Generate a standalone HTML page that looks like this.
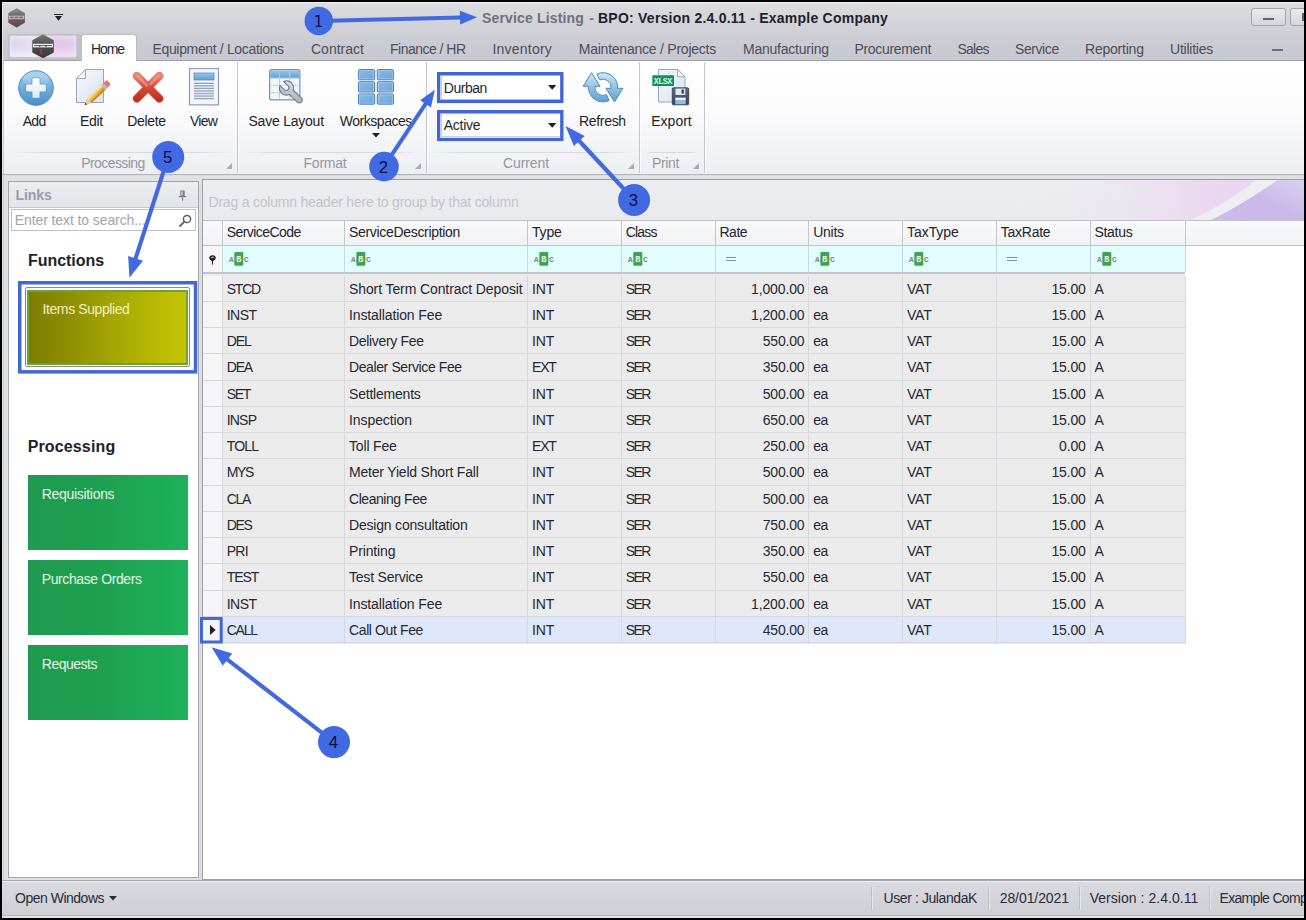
<!DOCTYPE html>
<html><head><meta charset="utf-8">
<title>Service Listing - BPO</title>
<style>
*{box-sizing:border-box;margin:0;padding:0}
html,body{width:1306px;height:920px;overflow:hidden;background:#000}
body{font-family:"Liberation Sans",sans-serif;font-size:13px;color:#1e1e2a;position:relative}
.abs{position:absolute}
.t{position:absolute;white-space:nowrap}
svg{overflow:visible}
</style></head><body>
<div class="abs" style="left:2.00px;top:2.00px;width:1302.00px;height:916.00px;background:#e0e1e5"></div>
<div class="abs" style="left:2.00px;top:2.00px;width:1302.00px;height:59.00px;background:linear-gradient(#e4e5e8 0,#dadbdf 3px,#d3d4d9 20px,#cbccd3 40px,#c8c9d0 59px)"></div>
<div class="abs" style="left:2.00px;top:2.00px;width:1302.00px;height:1.00px;background:#f1f1f3"></div>
<div class="abs" style="left:2.00px;top:2.00px;width:1.00px;height:916.00px;background:#e6e7ea"></div>
<div class="abs" style="left:3.00px;top:60.00px;width:1.00px;height:820.00px;background:#c9cad1"></div>
<div class="t" style="left:482.00px;top:9.85px;font-size:14px;line-height:17px;color:#6f707c;font-weight:bold;letter-spacing:0.160px;">Service Listing</div>
<div class="t" style="left:589.30px;top:9.85px;font-size:14px;line-height:17px;color:#6f707c;font-weight:bold;">-</div>
<div class="t" style="left:598.00px;top:9.85px;font-size:14px;line-height:17px;color:#1f202c;font-weight:bold;letter-spacing:0.234px;">BPO: Version 2.4.0.11 - Example Company</div>
<div class="abs" style="left:1251.00px;top:8.00px;width:35.00px;height:18.00px;border:1px solid #a2a3ab;border-radius:3px;background:linear-gradient(#e9eaed,#d6d7dc)"></div>
<div class="abs" style="left:1263.00px;top:18.00px;width:11.00px;height:2.00px;background:#60616c"></div>
<div class="abs" style="left:1290.00px;top:8.00px;width:35.00px;height:18.00px;border:1px solid #a2a3ab;border-radius:3px;background:linear-gradient(#e9eaed,#d6d7dc)"></div>
<div class="abs" style="left:1302.00px;top:13.00px;width:3.00px;height:8.00px;background:#60616c"></div>
<div class="abs" style="left:1272.00px;top:49.00px;width:11.00px;height:2.00px;background:#6c6d78"></div>
<div class="abs" style="left:7.50px;top:34.00px;width:73.00px;height:26.00px;background:#bfc0c7;border-radius:2px 3px 0 0"></div>
<div class="abs" style="left:8.50px;top:35.00px;width:68.60px;height:22.80px;border-radius:2px;border:1px solid #cfc6da;background:linear-gradient(90deg,#ddd3ec 0,#e7dcf1 30%,#e3c6ea 70%,#dccbe9 100%);box-shadow:inset 0 -6px 6px rgba(255,255,255,.45), inset 0 3px 4px rgba(255,255,255,.35)"></div>
<div class="abs" style="left:81.00px;top:34.00px;width:56.00px;height:28.00px;background:#fdfdfe;border:1px solid #b9bac2;border-bottom:none;border-radius:3px 3px 0 0"></div>
<div class="t" style="left:91.00px;top:41.25px;font-size:14px;line-height:17px;color:#23242f;letter-spacing:-1.086px;">Home</div>
<div class="t" style="left:152.50px;top:41.25px;font-size:14px;line-height:17px;color:#4b4c59;letter-spacing:-0.347px;">Equipment / Locations</div>
<div class="t" style="left:311.00px;top:41.25px;font-size:14px;line-height:17px;color:#4b4c59;letter-spacing:0.011px;">Contract</div>
<div class="t" style="left:390.00px;top:41.25px;font-size:14px;line-height:17px;color:#4b4c59;letter-spacing:-0.516px;">Finance / HR</div>
<div class="t" style="left:492.50px;top:41.25px;font-size:14px;line-height:17px;color:#4b4c59;letter-spacing:0.213px;">Inventory</div>
<div class="t" style="left:578.75px;top:41.25px;font-size:14px;line-height:17px;color:#4b4c59;letter-spacing:-0.234px;">Maintenance / Projects</div>
<div class="t" style="left:743.00px;top:41.25px;font-size:14px;line-height:17px;color:#4b4c59;letter-spacing:-0.228px;">Manufacturing</div>
<div class="t" style="left:854.50px;top:41.25px;font-size:14px;line-height:17px;color:#4b4c59;letter-spacing:-0.331px;">Procurement</div>
<div class="t" style="left:957.50px;top:41.25px;font-size:14px;line-height:17px;color:#4b4c59;letter-spacing:-0.754px;">Sales</div>
<div class="t" style="left:1015.00px;top:41.25px;font-size:14px;line-height:17px;color:#4b4c59;letter-spacing:-0.419px;">Service</div>
<div class="t" style="left:1085.00px;top:41.25px;font-size:14px;line-height:17px;color:#4b4c59;letter-spacing:-0.217px;">Reporting</div>
<div class="t" style="left:1170.00px;top:41.25px;font-size:14px;line-height:17px;color:#4b4c59;letter-spacing:-0.235px;">Utilities</div>
<div class="abs" style="left:4.00px;top:60.90px;width:1300.00px;height:113.10px;background:linear-gradient(#ffffff 0,#fcfcfd 45px,#f1f2f5 95px,#eceef1 113px)"></div>
<div class="abs" style="left:4.00px;top:59.90px;width:77.00px;height:1.00px;background:#a1a2aa"></div>
<div class="abs" style="left:137.00px;top:59.90px;width:1167.00px;height:1.00px;background:#a1a2aa"></div>
<div class="abs" style="left:2.00px;top:174.00px;width:1302.00px;height:1.00px;background:#b2b3bb"></div>
<div class="abs" style="left:2.00px;top:175.00px;width:1302.00px;height:1.00px;background:#dcdde1"></div>
<div class="abs" style="left:237.00px;top:62.00px;width:1.00px;height:111.00px;background:#c6c7ce"></div>
<div class="abs" style="left:238.00px;top:62.00px;width:1.00px;height:111.00px;background:#fbfbfc"></div>
<div class="abs" style="left:426.00px;top:62.00px;width:1.00px;height:111.00px;background:#c6c7ce"></div>
<div class="abs" style="left:427.00px;top:62.00px;width:1.00px;height:111.00px;background:#fbfbfc"></div>
<div class="abs" style="left:639.30px;top:62.00px;width:1.00px;height:111.00px;background:#c6c7ce"></div>
<div class="abs" style="left:640.30px;top:62.00px;width:1.00px;height:111.00px;background:#fbfbfc"></div>
<div class="abs" style="left:704.30px;top:62.00px;width:1.00px;height:111.00px;background:#c6c7ce"></div>
<div class="abs" style="left:705.30px;top:62.00px;width:1.00px;height:111.00px;background:#fbfbfc"></div>
<div class="abs" style="left:12.00px;top:151.50px;width:220.00px;height:1.00px;background:linear-gradient(90deg,rgba(214,215,221,0),#d9dade 15%,#d9dade 85%,rgba(214,215,221,0))"></div>
<div class="abs" style="left:243.00px;top:151.50px;width:178.00px;height:1.00px;background:linear-gradient(90deg,rgba(214,215,221,0),#d9dade 15%,#d9dade 85%,rgba(214,215,221,0))"></div>
<div class="abs" style="left:432.00px;top:151.50px;width:202.00px;height:1.00px;background:linear-gradient(90deg,rgba(214,215,221,0),#d9dade 15%,#d9dade 85%,rgba(214,215,221,0))"></div>
<div class="abs" style="left:645.00px;top:151.50px;width:54.00px;height:1.00px;background:linear-gradient(90deg,rgba(214,215,221,0),#d9dade 15%,#d9dade 85%,rgba(214,215,221,0))"></div>
<div class="t" style="left:81.25px;top:155.35px;font-size:14px;line-height:17px;color:#9596a1;letter-spacing:-0.576px;">Processing</div>
<div class="t" style="left:303.50px;top:155.35px;font-size:14px;line-height:17px;color:#9596a1;letter-spacing:-0.223px;">Format</div>
<div class="t" style="left:503.00px;top:155.35px;font-size:14px;line-height:17px;color:#9596a1;letter-spacing:-0.098px;">Current</div>
<div class="t" style="left:652.00px;top:155.35px;font-size:14px;line-height:17px;color:#9596a1;letter-spacing:-0.357px;">Print</div>
<svg class="abs" style="left:226.0px;top:163px" width="6" height="6"><path d="M6 0V6H0Z" fill="#a9aab3"/></svg>
<svg class="abs" style="left:415.0px;top:163px" width="6" height="6"><path d="M6 0V6H0Z" fill="#a9aab3"/></svg>
<svg class="abs" style="left:628.0px;top:163px" width="6" height="6"><path d="M6 0V6H0Z" fill="#a9aab3"/></svg>
<svg class="abs" style="left:693.0px;top:163px" width="6" height="6"><path d="M6 0V6H0Z" fill="#a9aab3"/></svg>
<div class="t" style="left:22.70px;top:113.35px;font-size:14px;line-height:17px;color:#1e1f2a;letter-spacing:-0.703px;">Add</div>
<div class="t" style="left:80.00px;top:113.35px;font-size:14px;line-height:17px;color:#1e1f2a;letter-spacing:-0.356px;">Edit</div>
<div class="t" style="left:127.20px;top:113.35px;font-size:14px;line-height:17px;color:#1e1f2a;letter-spacing:-0.311px;">Delete</div>
<div class="t" style="left:190.00px;top:113.35px;font-size:14px;line-height:17px;color:#1e1f2a;letter-spacing:-0.773px;">View</div>
<div class="t" style="left:248.50px;top:113.35px;font-size:14px;line-height:17px;color:#1e1f2a;letter-spacing:-0.230px;">Save Layout</div>
<div class="t" style="left:339.80px;top:113.35px;font-size:14px;line-height:17px;color:#1e1f2a;letter-spacing:-0.477px;">Workspaces</div>
<div class="t" style="left:579.00px;top:113.35px;font-size:14px;line-height:17px;color:#1e1f2a;letter-spacing:-0.317px;">Refresh</div>
<div class="t" style="left:651.30px;top:113.35px;font-size:14px;line-height:17px;color:#1e1f2a;letter-spacing:-0.010px;">Export</div>
<svg class="abs" style="left:372px;top:133px" width="8" height="5"><path d="M0 0H8L4 4.5Z" fill="#1e1f2a"/></svg>
<div class="abs" style="left:437.30px;top:72.10px;width:126.50px;height:31.10px;background:#fff"></div>
<div class="abs" style="left:440.50px;top:75.30px;width:120.20px;height:24.70px;border:1px solid #cfd0d6"></div>
<svg class="abs" style="left:437.300px;top:72.10px" width="126.500" height="31.10"><rect x="1.650" y="1.650" width="123.200" height="27.80" fill="none" stroke="#4066d8" stroke-width="3.300"/></svg>
<div class="t" style="left:443.80px;top:79.95px;font-size:14px;line-height:17px;color:#1e1f2a;letter-spacing:-0.486px;">Durban</div>
<svg class="abs" style="left:548.300px;top:85.1px" width="8.400" height="5"><path d="M0 0H8.400L4.200 4.800Z" fill="#1e1f2a"/></svg>
<div class="abs" style="left:437.30px;top:109.50px;width:126.50px;height:31.10px;background:#fff"></div>
<div class="abs" style="left:440.50px;top:112.70px;width:120.20px;height:24.70px;border:1px solid #cfd0d6"></div>
<svg class="abs" style="left:437.300px;top:109.50px" width="126.500" height="31.10"><rect x="1.650" y="1.650" width="123.200" height="27.80" fill="none" stroke="#4066d8" stroke-width="3.300"/></svg>
<div class="t" style="left:443.80px;top:116.85px;font-size:14px;line-height:17px;color:#1e1f2a;letter-spacing:-0.271px;">Active</div>
<svg class="abs" style="left:548.300px;top:122.5px" width="8.400" height="5"><path d="M0 0H8.400L4.200 4.800Z" fill="#1e1f2a"/></svg>
<div class="abs" style="left:2.00px;top:880.00px;width:1302.00px;height:38.00px;background:linear-gradient(#dadbdf 0,#d3d4da 55%,#cccdd3 100%)"></div>
<div class="abs" style="left:2.00px;top:879.50px;width:1302.00px;height:1.00px;background:#a3a4ac"></div>
<div class="abs" style="left:2.00px;top:880.50px;width:1302.00px;height:1.00px;background:#eeeff1"></div>
<div class="abs" style="left:2.00px;top:915.00px;width:1302.00px;height:1.00px;background:#b5b6bc"></div>
<div class="abs" style="left:2.00px;top:916.00px;width:1302.00px;height:2.00px;background:#e2e3e7"></div>
<div class="t" style="left:15.00px;top:889.95px;font-size:14px;line-height:17px;color:#2a2b38;letter-spacing:-0.494px;">Open Windows</div>
<svg class="abs" style="left:109.4px;top:896.2px" width="8" height="5"><path d="M0 0H8L4 4.5Z" fill="#2a2b38"/></svg>
<div class="abs" style="left:871.40px;top:886.50px;width:1.00px;height:23.00px;background:#bdbec5"></div>
<div class="abs" style="left:872.40px;top:886.50px;width:1.00px;height:23.00px;background:#e6e7ea"></div>
<div class="abs" style="left:988.10px;top:886.50px;width:1.00px;height:23.00px;background:#bdbec5"></div>
<div class="abs" style="left:989.10px;top:886.50px;width:1.00px;height:23.00px;background:#e6e7ea"></div>
<div class="abs" style="left:1079.10px;top:886.50px;width:1.00px;height:23.00px;background:#bdbec5"></div>
<div class="abs" style="left:1080.10px;top:886.50px;width:1.00px;height:23.00px;background:#e6e7ea"></div>
<div class="abs" style="left:1208.90px;top:886.50px;width:1.00px;height:23.00px;background:#bdbec5"></div>
<div class="abs" style="left:1209.90px;top:886.50px;width:1.00px;height:23.00px;background:#e6e7ea"></div>
<div class="t" style="left:883.50px;top:889.95px;font-size:14px;line-height:17px;color:#2a2b38;letter-spacing:-0.407px;">User : JulandaK</div>
<div class="t" style="left:999.70px;top:889.95px;font-size:14px;line-height:17px;color:#2a2b38;letter-spacing:-0.077px;">28/01/2021</div>
<div class="t" style="left:1089.70px;top:889.95px;font-size:14px;line-height:17px;color:#2a2b38;letter-spacing:0.037px;">Version : 2.4.0.11</div>
<div class="t" style="left:1219.50px;top:889.95px;font-size:14px;line-height:17px;color:#2a2b38;letter-spacing:-0.685px;">Example Company</div>
<svg width="0" height="0" style="position:absolute"><defs>
<linearGradient id="gHex" x1="0" y1="0" x2="0" y2="1"><stop offset="0" stop-color="#7b7b7d"/><stop offset=".45" stop-color="#4d4d4f"/><stop offset="1" stop-color="#3a3a3c"/></linearGradient>
<linearGradient id="gHex2" x1="0" y1="0" x2="0" y2="1"><stop offset="0" stop-color="#8e8e90"/><stop offset=".5" stop-color="#636365"/><stop offset="1" stop-color="#4c4c4e"/></linearGradient>
<linearGradient id="gAdd" x1="0" y1="0" x2="0" y2="1"><stop offset="0" stop-color="#a9d3ec"/><stop offset=".5" stop-color="#6eaedb"/><stop offset="1" stop-color="#4b8fc6"/></linearGradient>
<linearGradient id="gPlus" x1="0" y1="0" x2="0" y2="1"><stop offset="0" stop-color="#ffffff"/><stop offset="1" stop-color="#d9ecf8"/></linearGradient>
<linearGradient id="gPage" x1="0" y1="0" x2="1" y2="1"><stop offset="0" stop-color="#f4f7fc"/><stop offset="1" stop-color="#dbe3f1"/></linearGradient>
<linearGradient id="gPen" x1="0" y1="0" x2="1" y2="1"><stop offset="0" stop-color="#f7d36a"/><stop offset="1" stop-color="#d99a24"/></linearGradient>
<linearGradient id="gDel" x1="0" y1="0" x2="0" y2="1"><stop offset="0" stop-color="#ea8473"/><stop offset=".5" stop-color="#d64a36"/><stop offset="1" stop-color="#c23222"/></linearGradient>
<linearGradient id="gBlue" x1="0" y1="0" x2="0" y2="1"><stop offset="0" stop-color="#9cc6ea"/><stop offset="1" stop-color="#5e9fd6"/></linearGradient>
<linearGradient id="gBlue2" x1="0" y1="0" x2="1" y2="1"><stop offset="0" stop-color="#8dbbe6"/><stop offset="1" stop-color="#6ba4da"/></linearGradient>
<linearGradient id="gWr" x1="0" y1="0" x2="1" y2="1"><stop offset="0" stop-color="#e3e7ec"/><stop offset="1" stop-color="#9aa3b0"/></linearGradient>
<linearGradient id="gRef" x1="0" y1="0" x2="0" y2="1"><stop offset="0" stop-color="#c9e8f8"/><stop offset="1" stop-color="#5d9fd6"/></linearGradient>
<linearGradient id="gRef2" x1="0" y1="1" x2="0" y2="0"><stop offset="0" stop-color="#c9e8f8"/><stop offset="1" stop-color="#5d9fd6"/></linearGradient>
<linearGradient id="gFl" x1="0" y1="0" x2="0" y2="1"><stop offset="0" stop-color="#5b6b86"/><stop offset="1" stop-color="#33425c"/></linearGradient>
</defs></svg>
<svg class="abs" style="left:8.00px;top:7.50px" width="17.2" height="20" viewBox="0 0 17.2 20"><path d="M8.6 0.3L16.9 5V14.8L8.6 19.6L0.3 14.8V5Z" fill="url(#gHex2)"/><rect x="1" y="7.700" width="15.200" height="3.600" fill="#cfcfd1" opacity=".8"/><rect x="2.200" y="8.700" width="3.400" height="1.500" fill="#6f6f72"/><rect x="6.800" y="8.700" width="3.400" height="1.500" fill="#6f6f72"/><rect x="11.400" y="8.700" width="3.400" height="1.500" fill="#6f6f72"/><rect x="4.600" y="11.700" width="5.600" height="3.400" fill="#a8343c" opacity=".6"/></svg>
<svg class="abs" style="left:54.00px;top:14.00px" width="9" height="8" viewBox="0 0 9 8"><rect x="0" y="0" width="9" height="1" fill="#1f2030"/><path d="M1 2H8L4.500 6.800Z" fill="#1c1d2c"/></svg>
<svg class="abs" style="left:31.60px;top:33.80px" width="22.1" height="24.6" viewBox="0 0 22.1 24.6"><path d="M11 0.3L21.8 6.2V18.4L11 24.3L0.3 18.4V6.2Z" fill="url(#gHex)"/><rect x="1" y="9.8" width="20" height="3.6" fill="#f2f2f2"/><rect x="2" y="11.2" width="18" height=".9" fill="#4a4a4c"/><rect x="7.2" y="11" width="1" height="2" fill="#4a4a4c"/><rect x="13.6" y="11" width="1" height="2" fill="#4a4a4c"/><path d="M7.5 15.5L10.2 15L9.6 17.4L11 20.5L8.6 20Z" fill="#c0343c" opacity=".9"/></svg>
<svg class="abs" style="left:17.60px;top:69.50px" width="36" height="36" viewBox="0 0 36 36"><circle cx="18" cy="18" r="17.300" fill="url(#gAdd)" stroke="#4f8dc0" stroke-width="1"/><ellipse cx="18" cy="9.500" rx="13" ry="7.500" fill="#fff" opacity=".16"/><path d="M15.00 8.80 H21.00 V15.00 H27.20 V21.00 H21.00 V27.20 H15.00 V21.00 H8.80 V15.00 H15.00 Z" fill="#4683b6" opacity=".6" stroke="#4683b6" stroke-width="2.600" stroke-linejoin="round"/><path d="M15.00 8.80 H21.00 V15.00 H27.20 V21.00 H21.00 V27.20 H15.00 V21.00 H8.80 V15.00 H15.00 Z" fill="url(#gPlus)" stroke="url(#gPlus)" stroke-width="1.200" stroke-linejoin="round"/></svg>
<svg class="abs" style="left:76.20px;top:68.70px" width="36" height="38" viewBox="0 0 36 38"><path d="M9.5 0.5H27.5V33.5H0.5V9.5Z" fill="url(#gPage)" stroke="#97a3c0" stroke-width="1"/><path d="M9.5 0.5V9.5H0.5Z" fill="#fff" stroke="#97a3c0" stroke-width="1" stroke-linejoin="round"/><g transform="translate(8.6,36.2) rotate(-43.6)"><path d="M0 0L6.5 -3.2V3.200Z" fill="#e9c9a0"/><path d="M0 0L2.4 -1.2V1.200Z" fill="#3a3a44"/><rect x="6.500" y="-3.200" width="19.500" height="6.400" fill="url(#gPen)"/><rect x="6.500" y="-3.200" width="19.500" height="2" fill="#fbe28f"/><rect x="6.500" y="1.400" width="19.500" height="1.800" fill="#c98a1d"/><rect x="26" y="-3.200" width="2.600" height="6.400" fill="#b9bcc6"/><path d="M28.600 -3.200H32a1.600 1.600 0 0 1 1.600 1.600V1.600A1.600 1.600 0 0 1 32 3.200H28.600Z" fill="#e27c72"/></g></svg>
<svg class="abs" style="left:131.80px;top:71.20px" width="32" height="32" viewBox="0 0 32 32"><path d="M4.850 4.950L27.350 27.550M27.350 4.950L4.850 27.550" stroke="#b93020" stroke-width="8.600" stroke-linecap="round" opacity=".5"/><path d="M4.850 4.950L27.350 27.550M27.350 4.950L4.850 27.550" stroke="url(#gDel)" stroke-width="7.300" stroke-linecap="round"/><path d="M5.300 4.800L15 14.600M26.600 4.800L18.500 13" stroke="#f4ab9c" stroke-width="2.400" stroke-linecap="round" opacity=".55"/></svg>
<svg class="abs" style="left:189.10px;top:67.80px" width="30" height="37.4" viewBox="0 0 30 37.4"><rect x=".5" y=".5" width="29" height="36.400" fill="#f3f6fb" stroke="#8f9bb8" stroke-width="1.200"/><rect x="5" y="5" width="20" height="7" fill="url(#gBlue)" stroke="#5b8fc6" stroke-width=".8"/><rect x="5" y="14.60" width="20" height="1.400" fill="#93a6c0"/><rect x="5" y="17.15" width="20" height="1.400" fill="#93a6c0"/><rect x="5" y="19.70" width="20" height="1.400" fill="#93a6c0"/><rect x="5" y="22.25" width="20" height="1.400" fill="#93a6c0"/><rect x="5" y="24.80" width="20" height="1.400" fill="#93a6c0"/><rect x="5" y="27.35" width="20" height="1.400" fill="#93a6c0"/><rect x="5" y="29.90" width="20" height="1.400" fill="#93a6c0"/></svg>
<svg class="abs" style="left:269.00px;top:68.80px" width="36" height="37" viewBox="0 0 36 37"><rect x=".6" y=".6" width="30.300" height="30.300" rx="2.200" fill="#f3f7fc" stroke="#6f93c6" stroke-width="1.200"/><path d="M1.200 9.200V2.800A1.600 1.600 0 0 1 2.800 1.200H28.700A1.600 1.600 0 0 1 30.300 2.800V9.200Z" fill="url(#gBlue)"/><path d="M10.600 1.200V30.300M20.800 1.200V30.300" stroke="#b3c6e4" stroke-width="1"/><path d="M1.200 9.200H30.300M1.200 16.300H30.300M1.200 23.600H30.300" stroke="#c3d2ea" stroke-width="1"/><g transform="translate(17.500,19) rotate(43)"><path d="M-6.46 -2.70 L-0.50 -2.70 A2.70 2.70 0 0 1 -0.50 2.70 L-6.46 2.70 A7.00 7.00 0 0 0 6.37 2.90 L17.50 2.90 A2.90 2.90 0 0 0 17.50 -2.90 L6.37 -2.90 A7.00 7.00 0 0 0 -6.46 -2.70 Z" fill="url(#gWr)" stroke="#6f7a8c" stroke-width="1.100" stroke-linejoin="round"/></g></svg>
<svg class="abs" style="left:358.00px;top:68.60px" width="36.2" height="36.8" viewBox="0 0 36.2 36.8"><rect x="0.50" y="0.50" width="16.200" height="10.300" rx="1" fill="url(#gBlue2)" stroke="#4e83bd" stroke-width="1"/><rect x="1.60" y="1.60" width="14" height="8.100" fill="none" stroke="#a9cdf0" stroke-width=".8" opacity=".8"/><rect x="19.30" y="0.50" width="16.200" height="10.300" rx="1" fill="url(#gBlue2)" stroke="#4e83bd" stroke-width="1"/><rect x="20.40" y="1.60" width="14" height="8.100" fill="none" stroke="#a9cdf0" stroke-width=".8" opacity=".8"/><rect x="0.50" y="12.70" width="16.200" height="10.300" rx="1" fill="url(#gBlue2)" stroke="#4e83bd" stroke-width="1"/><rect x="1.60" y="13.80" width="14" height="8.100" fill="none" stroke="#a9cdf0" stroke-width=".8" opacity=".8"/><rect x="19.30" y="12.70" width="16.200" height="10.300" rx="1" fill="url(#gBlue2)" stroke="#4e83bd" stroke-width="1"/><rect x="20.40" y="13.80" width="14" height="8.100" fill="none" stroke="#a9cdf0" stroke-width=".8" opacity=".8"/><rect x="0.50" y="24.90" width="16.200" height="10.300" rx="1" fill="url(#gBlue2)" stroke="#4e83bd" stroke-width="1"/><rect x="1.60" y="26.00" width="14" height="8.100" fill="none" stroke="#a9cdf0" stroke-width=".8" opacity=".8"/><rect x="19.30" y="24.90" width="16.200" height="10.300" rx="1" fill="url(#gBlue2)" stroke="#4e83bd" stroke-width="1"/><rect x="20.40" y="26.00" width="14" height="8.100" fill="none" stroke="#a9cdf0" stroke-width=".8" opacity=".8"/></svg>
<svg class="abs" style="left:583.00px;top:71.00px" width="41" height="33" viewBox="0 0 41 33"><g transform="translate(20,16.300)"><path d="M-19.900 -1L-11.500 -14.600L-2.900 -1H-8.100A8.100 8.100 0 0 0 3.400 7.350L6.170 13.230A14.600 14.600 0 0 1 -14.600 -1Z" fill="url(#gRef)" stroke="#5189bf" stroke-width="1" stroke-linejoin="round"/><path d="M-19.900 -1L-11.500 -14.600L-2.900 -1H-8.100A8.100 8.100 0 0 0 3.400 7.350L6.170 13.230A14.600 14.600 0 0 1 -14.600 -1Z" fill="url(#gRef2)" stroke="#5189bf" stroke-width="1" stroke-linejoin="round" transform="rotate(180)"/></g></svg>
<svg class="abs" style="left:651.70px;top:68.80px" width="38.5" height="37" viewBox="0 0 38.5 37"><path d="M6.500 .5H25.700L33 7.800V33H6.500Z" fill="url(#gPage)" stroke="#9aa5c0"/><path d="M25.700 .5V7.800H33Z" fill="#fff" stroke="#9aa5c0" stroke-linejoin="round"/><rect x=".3" y="6.200" width="21.700" height="10.800" rx=".6" fill="#12905a"/><text x="11.100" y="14.800" font-family="Liberation Mono, monospace" font-size="8.500" font-weight="bold" fill="#d9fbe8" text-anchor="middle" textLength="18.500">XLSX</text><rect x="20.300" y="18.800" width="16.400" height="17" rx="1" fill="url(#gFl)" stroke="#2c3850" stroke-width=".8"/><rect x="23.500" y="19.600" width="9.800" height="6.400" fill="#e3e8f0"/><rect x="29.600" y="20.600" width="2.200" height="4" fill="#2c3850"/><rect x="23.300" y="28.600" width="10.400" height="3" fill="#f2f6fa"/><rect x="23.300" y="31.600" width="10.400" height="3.600" fill="#8dbfe4"/></svg>
<div class="abs" style="left:8.30px;top:181.00px;width:191.00px;height:697.00px;background:#fff;border:1px solid #a3a4ac"></div>
<div class="abs" style="left:9.30px;top:182.00px;width:189.00px;height:25.60px;background:linear-gradient(#ecedf0,#e3e4e8);border-bottom:1px solid #c6c7ce"></div>
<div class="t" style="left:15.60px;top:186.85px;font-size:14px;line-height:17px;color:#999bab;font-weight:bold;letter-spacing:-0.113px;">Links</div>
<svg class="abs" style="left:178.00px;top:189.50px" width="9" height="11" viewBox="0 0 9 11"><rect x="2.300" y=".5" width="4.400" height="5.500" fill="#7b7c88"/><rect x="3.300" y="1.400" width="1.300" height="4" fill="#d7d8de"/><rect x=".8" y="6" width="7.400" height="1.200" fill="#7b7c88"/><rect x="4" y="7.200" width="1.100" height="3.500" fill="#7b7c88"/></svg>
<div class="abs" style="left:10.70px;top:209.00px;width:185.80px;height:22.40px;background:#fff;border:1px solid #c0c1c9"></div>
<div class="t" style="left:14.70px;top:212.05px;font-size:14px;line-height:17px;color:#a2a3ad;letter-spacing:-0.090px;">Enter text to search...</div>
<svg class="abs" style="left:179.00px;top:213.50px" width="13" height="13" viewBox="0 0 13 13"><circle cx="8" cy="5" r="3.600" fill="none" stroke="#5d5e6a" stroke-width="1.500"/><path d="M5.400 7.600L1 12" stroke="#5d5e6a" stroke-width="1.800" stroke-linecap="round"/></svg>
<div class="t" style="left:28.00px;top:250.86px;font-size:16px;line-height:19px;color:#1f2030;font-weight:bold;letter-spacing:-0.049px;">Functions</div>
<div class="abs" style="left:25.30px;top:287.30px;width:164.30px;height:79.40px;background:#fff;border:1px solid #868b86;border-radius:2px"></div>
<div class="abs" style="left:27.30px;top:289.50px;width:160.30px;height:75.00px;background:linear-gradient(90deg,#7d7d04 0,#8e8e03 25%,#a6a603 55%,#bcbc04 85%,#c4c404 100%);border:2px solid #6ca23a"></div>
<div class="t" style="left:42.50px;top:301.15px;font-size:14px;line-height:17px;color:#f4f1c4;letter-spacing:-0.400px;">Items Supplied</div>
<div class="t" style="left:27.70px;top:436.56px;font-size:16px;line-height:19px;color:#1f2030;font-weight:bold;letter-spacing:0.134px;">Processing</div>
<div class="abs" style="left:27.70px;top:474.80px;width:160.00px;height:74.80px;background:linear-gradient(90deg,#1f9a4e 0,#1e9f50 40%,#1fb15a 100%)"></div>
<div class="t" style="left:41.80px;top:485.65px;font-size:14px;line-height:17px;color:#e4f6e6;letter-spacing:-0.314px;">Requisitions</div>
<div class="abs" style="left:27.70px;top:559.80px;width:160.00px;height:74.80px;background:linear-gradient(90deg,#1f9a4e 0,#1e9f50 40%,#1fb15a 100%)"></div>
<div class="t" style="left:41.80px;top:570.65px;font-size:14px;line-height:17px;color:#e4f6e6;letter-spacing:-0.408px;">Purchase Orders</div>
<div class="abs" style="left:27.70px;top:644.80px;width:160.00px;height:74.80px;background:linear-gradient(90deg,#1f9a4e 0,#1e9f50 40%,#1fb15a 100%)"></div>
<div class="t" style="left:41.80px;top:655.65px;font-size:14px;line-height:17px;color:#e4f6e6;letter-spacing:-0.501px;">Requests</div>
<div class="abs" style="left:202.00px;top:179.30px;width:1102.30px;height:701.00px;background:#fff;border:1px solid #9c9da6;border-right:none"></div>
<div class="abs" style="left:199.50px;top:181.50px;width:1.80px;height:698.50px;background:#d9dade"></div>
<div class="abs" style="left:203.00px;top:180.30px;width:1101.00px;height:40.40px;background:linear-gradient(#ecedf0,#e9eaed)"></div>
<svg class="abs" style="left:1040px;top:180.300px" width="264" height="40.200" viewBox="0 0 264 40.200"><defs><linearGradient id="sw1" x1="0" y1="0" x2="1" y2="0"><stop offset="0" stop-color="#ebe2f0" stop-opacity="0"/><stop offset=".3" stop-color="#ece2f1" stop-opacity=".55"/><stop offset=".62" stop-color="#ead8ef"/><stop offset="1" stop-color="#e6d6ef"/></linearGradient><linearGradient id="sw2" x1="0" y1="1" x2="1" y2="0"><stop offset="0" stop-color="#cbbcea"/><stop offset=".5" stop-color="#c9b8e8"/><stop offset="1" stop-color="#dad0f0"/></linearGradient></defs><rect x="0" y="0" width="264" height="40.200" fill="url(#sw1)"/><path d="M150 40.200Q186 24 216 0H238Q200 26 171 40.200Z" fill="#eeeef2"/><path d="M171 40.200Q200 26 238 0H264V40.200Z" fill="url(#sw2)"/></svg>
<div class="t" style="left:208.50px;top:193.85px;font-size:14px;line-height:17px;color:#c2c3cc;letter-spacing:-0.217px;">Drag a column header here to group by that column</div>
<div class="abs" style="left:203.00px;top:219.70px;width:1101.00px;height:26.70px;background:linear-gradient(#fafafb,#f0f1f3);border-top:1px solid #bfc0c8;border-bottom:1px solid #c2c3ca"></div>
<div class="abs" style="left:222.20px;top:246.30px;width:963.10px;height:25.40px;background:#e2fdfd"></div>
<div class="abs" style="left:203.00px;top:271.60px;width:982.30px;height:1.00px;background:#d9dade"></div>
<div class="abs" style="left:203.00px;top:272.40px;width:982.30px;height:1.60px;background:#c3c4cb"></div>
<div class="abs" style="left:203.00px;top:274.00px;width:982.30px;height:1.60px;background:#ececef"></div>
<div class="abs" style="left:222.20px;top:276.00px;width:963.10px;height:367.50px;background:#ebebec"></div>
<div class="abs" style="left:222.20px;top:617.25px;width:963.10px;height:26.25px;background:#dfe8fb"></div>
<div class="abs" style="left:203.00px;top:246.30px;width:19.90px;height:25.30px;background:#f6f6f8"></div>
<div class="abs" style="left:203.00px;top:276.00px;width:19.90px;height:367.50px;background:#f5f5f7"></div>
<div class="abs" style="left:203.00px;top:300.85px;width:982.30px;height:1.00px;background:#d7d8dd"></div>
<div class="abs" style="left:203.00px;top:327.10px;width:982.30px;height:1.00px;background:#d7d8dd"></div>
<div class="abs" style="left:203.00px;top:353.35px;width:982.30px;height:1.00px;background:#d7d8dd"></div>
<div class="abs" style="left:203.00px;top:379.60px;width:982.30px;height:1.00px;background:#d7d8dd"></div>
<div class="abs" style="left:203.00px;top:405.85px;width:982.30px;height:1.00px;background:#d7d8dd"></div>
<div class="abs" style="left:203.00px;top:432.10px;width:982.30px;height:1.00px;background:#d7d8dd"></div>
<div class="abs" style="left:203.00px;top:458.35px;width:982.30px;height:1.00px;background:#d7d8dd"></div>
<div class="abs" style="left:203.00px;top:484.60px;width:982.30px;height:1.00px;background:#d7d8dd"></div>
<div class="abs" style="left:203.00px;top:510.85px;width:982.30px;height:1.00px;background:#d7d8dd"></div>
<div class="abs" style="left:203.00px;top:537.10px;width:982.30px;height:1.00px;background:#d7d8dd"></div>
<div class="abs" style="left:203.00px;top:563.35px;width:982.30px;height:1.00px;background:#d7d8dd"></div>
<div class="abs" style="left:203.00px;top:589.60px;width:982.30px;height:1.00px;background:#d7d8dd"></div>
<div class="abs" style="left:203.00px;top:615.85px;width:982.30px;height:1.00px;background:#d7d8dd"></div>
<div class="abs" style="left:203.00px;top:642.10px;width:982.30px;height:1.00px;background:#d7d8dd"></div>
<div class="abs" style="left:221.70px;top:221.00px;width:1.00px;height:25.00px;background:#c6c7ce"></div>
<div class="abs" style="left:221.70px;top:246.30px;width:1.00px;height:25.30px;background:#c9d6db"></div>
<div class="abs" style="left:221.70px;top:276.00px;width:1.00px;height:367.50px;background:#d7d8dd"></div>
<div class="abs" style="left:344.00px;top:221.00px;width:1.00px;height:25.00px;background:#c6c7ce"></div>
<div class="abs" style="left:344.00px;top:246.30px;width:1.00px;height:25.30px;background:#c9d6db"></div>
<div class="abs" style="left:344.00px;top:276.00px;width:1.00px;height:367.50px;background:#d7d8dd"></div>
<div class="abs" style="left:527.00px;top:221.00px;width:1.00px;height:25.00px;background:#c6c7ce"></div>
<div class="abs" style="left:527.00px;top:246.30px;width:1.00px;height:25.30px;background:#c9d6db"></div>
<div class="abs" style="left:527.00px;top:276.00px;width:1.00px;height:367.50px;background:#d7d8dd"></div>
<div class="abs" style="left:620.75px;top:221.00px;width:1.00px;height:25.00px;background:#c6c7ce"></div>
<div class="abs" style="left:620.75px;top:246.30px;width:1.00px;height:25.30px;background:#c9d6db"></div>
<div class="abs" style="left:620.75px;top:276.00px;width:1.00px;height:367.50px;background:#d7d8dd"></div>
<div class="abs" style="left:714.50px;top:221.00px;width:1.00px;height:25.00px;background:#c6c7ce"></div>
<div class="abs" style="left:714.50px;top:246.30px;width:1.00px;height:25.30px;background:#c9d6db"></div>
<div class="abs" style="left:714.50px;top:276.00px;width:1.00px;height:367.50px;background:#d7d8dd"></div>
<div class="abs" style="left:808.25px;top:221.00px;width:1.00px;height:25.00px;background:#c6c7ce"></div>
<div class="abs" style="left:808.25px;top:246.30px;width:1.00px;height:25.30px;background:#c9d6db"></div>
<div class="abs" style="left:808.25px;top:276.00px;width:1.00px;height:367.50px;background:#d7d8dd"></div>
<div class="abs" style="left:902.00px;top:221.00px;width:1.00px;height:25.00px;background:#c6c7ce"></div>
<div class="abs" style="left:902.00px;top:246.30px;width:1.00px;height:25.30px;background:#c9d6db"></div>
<div class="abs" style="left:902.00px;top:276.00px;width:1.00px;height:367.50px;background:#d7d8dd"></div>
<div class="abs" style="left:995.75px;top:221.00px;width:1.00px;height:25.00px;background:#c6c7ce"></div>
<div class="abs" style="left:995.75px;top:246.30px;width:1.00px;height:25.30px;background:#c9d6db"></div>
<div class="abs" style="left:995.75px;top:276.00px;width:1.00px;height:367.50px;background:#d7d8dd"></div>
<div class="abs" style="left:1089.50px;top:221.00px;width:1.00px;height:25.00px;background:#c6c7ce"></div>
<div class="abs" style="left:1089.50px;top:246.30px;width:1.00px;height:25.30px;background:#c9d6db"></div>
<div class="abs" style="left:1089.50px;top:276.00px;width:1.00px;height:367.50px;background:#d7d8dd"></div>
<div class="abs" style="left:1184.80px;top:221.00px;width:1.00px;height:25.00px;background:#c6c7ce"></div>
<div class="abs" style="left:1184.80px;top:246.30px;width:1.00px;height:25.30px;background:#c9d6db"></div>
<div class="abs" style="left:1184.80px;top:276.00px;width:1.00px;height:367.50px;background:#d7d8dd"></div>
<div class="t" style="left:226.70px;top:224.25px;font-size:14px;line-height:17px;color:#23242f;letter-spacing:-0.562px;">ServiceCode</div>
<svg class="abs" style="left:228.70px;top:252.30px" width="20" height="14" viewBox="0 0 20 14"><rect x="5.300" y="0" width="9" height="13.700" rx="1.200" fill="#43a24e"/><text x="2.300" y="10.400" font-family="Liberation Mono, monospace" font-size="7.800" font-weight="bold" fill="#80838b" text-anchor="middle">A</text><text x="9.800" y="10.400" font-family="Liberation Mono, monospace" font-size="8.500" font-weight="bold" fill="#eafbea" text-anchor="middle">B</text><text x="17.400" y="10.400" font-family="Liberation Mono, monospace" font-size="7.800" font-weight="bold" fill="#80838b" text-anchor="middle">C</text></svg>
<div class="t" style="left:349.00px;top:224.25px;font-size:14px;line-height:17px;color:#23242f;letter-spacing:-0.316px;">ServiceDescription</div>
<svg class="abs" style="left:351.00px;top:252.30px" width="20" height="14" viewBox="0 0 20 14"><rect x="5.300" y="0" width="9" height="13.700" rx="1.200" fill="#43a24e"/><text x="2.300" y="10.400" font-family="Liberation Mono, monospace" font-size="7.800" font-weight="bold" fill="#80838b" text-anchor="middle">A</text><text x="9.800" y="10.400" font-family="Liberation Mono, monospace" font-size="8.500" font-weight="bold" fill="#eafbea" text-anchor="middle">B</text><text x="17.400" y="10.400" font-family="Liberation Mono, monospace" font-size="7.800" font-weight="bold" fill="#80838b" text-anchor="middle">C</text></svg>
<div class="t" style="left:532.00px;top:224.25px;font-size:14px;line-height:17px;color:#23242f;letter-spacing:-0.160px;">Type</div>
<svg class="abs" style="left:534.00px;top:252.30px" width="20" height="14" viewBox="0 0 20 14"><rect x="5.300" y="0" width="9" height="13.700" rx="1.200" fill="#43a24e"/><text x="2.300" y="10.400" font-family="Liberation Mono, monospace" font-size="7.800" font-weight="bold" fill="#80838b" text-anchor="middle">A</text><text x="9.800" y="10.400" font-family="Liberation Mono, monospace" font-size="8.500" font-weight="bold" fill="#eafbea" text-anchor="middle">B</text><text x="17.400" y="10.400" font-family="Liberation Mono, monospace" font-size="7.800" font-weight="bold" fill="#80838b" text-anchor="middle">C</text></svg>
<div class="t" style="left:625.75px;top:224.25px;font-size:14px;line-height:17px;color:#23242f;letter-spacing:-0.822px;">Class</div>
<svg class="abs" style="left:627.75px;top:252.30px" width="20" height="14" viewBox="0 0 20 14"><rect x="5.300" y="0" width="9" height="13.700" rx="1.200" fill="#43a24e"/><text x="2.300" y="10.400" font-family="Liberation Mono, monospace" font-size="7.800" font-weight="bold" fill="#80838b" text-anchor="middle">A</text><text x="9.800" y="10.400" font-family="Liberation Mono, monospace" font-size="8.500" font-weight="bold" fill="#eafbea" text-anchor="middle">B</text><text x="17.400" y="10.400" font-family="Liberation Mono, monospace" font-size="7.800" font-weight="bold" fill="#80838b" text-anchor="middle">C</text></svg>
<div class="t" style="left:719.50px;top:224.25px;font-size:14px;line-height:17px;color:#23242f;letter-spacing:-0.497px;">Rate</div>
<div class="abs" style="left:726.00px;top:257.30px;width:10.00px;height:1.20px;background:#8b8d96"></div>
<div class="abs" style="left:726.00px;top:260.30px;width:10.00px;height:1.20px;background:#8b8d96"></div>
<div class="t" style="left:813.25px;top:224.25px;font-size:14px;line-height:17px;color:#23242f;letter-spacing:-0.266px;">Units</div>
<svg class="abs" style="left:815.25px;top:252.30px" width="20" height="14" viewBox="0 0 20 14"><rect x="5.300" y="0" width="9" height="13.700" rx="1.200" fill="#43a24e"/><text x="2.300" y="10.400" font-family="Liberation Mono, monospace" font-size="7.800" font-weight="bold" fill="#80838b" text-anchor="middle">A</text><text x="9.800" y="10.400" font-family="Liberation Mono, monospace" font-size="8.500" font-weight="bold" fill="#eafbea" text-anchor="middle">B</text><text x="17.400" y="10.400" font-family="Liberation Mono, monospace" font-size="7.800" font-weight="bold" fill="#80838b" text-anchor="middle">C</text></svg>
<div class="t" style="left:907.00px;top:224.25px;font-size:14px;line-height:17px;color:#23242f;letter-spacing:-0.053px;">TaxType</div>
<svg class="abs" style="left:909.00px;top:252.30px" width="20" height="14" viewBox="0 0 20 14"><rect x="5.300" y="0" width="9" height="13.700" rx="1.200" fill="#43a24e"/><text x="2.300" y="10.400" font-family="Liberation Mono, monospace" font-size="7.800" font-weight="bold" fill="#80838b" text-anchor="middle">A</text><text x="9.800" y="10.400" font-family="Liberation Mono, monospace" font-size="8.500" font-weight="bold" fill="#eafbea" text-anchor="middle">B</text><text x="17.400" y="10.400" font-family="Liberation Mono, monospace" font-size="7.800" font-weight="bold" fill="#80838b" text-anchor="middle">C</text></svg>
<div class="t" style="left:1000.75px;top:224.25px;font-size:14px;line-height:17px;color:#23242f;letter-spacing:-0.246px;">TaxRate</div>
<div class="abs" style="left:1007.25px;top:257.30px;width:10.00px;height:1.20px;background:#8b8d96"></div>
<div class="abs" style="left:1007.25px;top:260.30px;width:10.00px;height:1.20px;background:#8b8d96"></div>
<div class="t" style="left:1094.50px;top:224.25px;font-size:14px;line-height:17px;color:#23242f;letter-spacing:-0.304px;">Status</div>
<svg class="abs" style="left:1096.50px;top:252.30px" width="20" height="14" viewBox="0 0 20 14"><rect x="5.300" y="0" width="9" height="13.700" rx="1.200" fill="#43a24e"/><text x="2.300" y="10.400" font-family="Liberation Mono, monospace" font-size="7.800" font-weight="bold" fill="#80838b" text-anchor="middle">A</text><text x="9.800" y="10.400" font-family="Liberation Mono, monospace" font-size="8.500" font-weight="bold" fill="#eafbea" text-anchor="middle">B</text><text x="17.400" y="10.400" font-family="Liberation Mono, monospace" font-size="7.800" font-weight="bold" fill="#80838b" text-anchor="middle">C</text></svg>
<svg class="abs" style="left:208.60px;top:254.80px" width="7" height="10" viewBox="0 0 7 10"><path d="M.6 3.200L3.500 7.200L6.400 3.200Z" fill="#1e1f28"/><ellipse cx="3.500" cy="2.700" rx="3.200" ry="2.500" fill="#1e1f28"/><ellipse cx="3.500" cy="2.300" rx="1.700" ry=".9" fill="#9a9ba3"/><rect x="3" y="6.500" width="1" height="3.200" fill="#1e1f28"/></svg>
<div class="t" style="left:226.70px;top:280.65px;font-size:14px;line-height:17px;color:#262733;letter-spacing:-1.209px;">STCD</div>
<div class="t" style="left:349.00px;top:280.65px;font-size:14px;line-height:17px;color:#262733;letter-spacing:-0.102px;">Short Term Contract Deposit</div>
<div class="t" style="left:532.00px;top:280.65px;font-size:14px;line-height:17px;color:#262733;letter-spacing:-0.074px;">INT</div>
<div class="t" style="left:625.75px;top:280.65px;font-size:14px;line-height:17px;color:#262733;letter-spacing:-1.625px;">SER</div>
<div class="t" style="left:751.07px;top:280.65px;font-size:14px;line-height:17px;color:#262733;letter-spacing:-0.140px;">1,000.00</div>
<div class="t" style="left:813.25px;top:280.65px;font-size:14px;line-height:17px;color:#262733;letter-spacing:-0.561px;">ea</div>
<div class="t" style="left:907.00px;top:280.65px;font-size:14px;line-height:17px;color:#262733;letter-spacing:-0.220px;">VAT</div>
<div class="t" style="left:1051.50px;top:280.65px;font-size:14px;line-height:17px;color:#262733;letter-spacing:-0.168px;">15.00</div>
<div class="t" style="left:1094.50px;top:280.65px;font-size:14px;line-height:17px;color:#262733;">A</div>
<div class="t" style="left:226.70px;top:306.90px;font-size:14px;line-height:17px;color:#262733;letter-spacing:-0.475px;">INST</div>
<div class="t" style="left:349.00px;top:306.90px;font-size:14px;line-height:17px;color:#262733;letter-spacing:-0.117px;">Installation Fee</div>
<div class="t" style="left:532.00px;top:306.90px;font-size:14px;line-height:17px;color:#262733;letter-spacing:-0.074px;">INT</div>
<div class="t" style="left:625.75px;top:306.90px;font-size:14px;line-height:17px;color:#262733;letter-spacing:-1.625px;">SER</div>
<div class="t" style="left:751.07px;top:306.90px;font-size:14px;line-height:17px;color:#262733;letter-spacing:-0.140px;">1,200.00</div>
<div class="t" style="left:813.25px;top:306.90px;font-size:14px;line-height:17px;color:#262733;letter-spacing:-0.561px;">ea</div>
<div class="t" style="left:907.00px;top:306.90px;font-size:14px;line-height:17px;color:#262733;letter-spacing:-0.220px;">VAT</div>
<div class="t" style="left:1051.50px;top:306.90px;font-size:14px;line-height:17px;color:#262733;letter-spacing:-0.168px;">15.00</div>
<div class="t" style="left:1094.50px;top:306.90px;font-size:14px;line-height:17px;color:#262733;">A</div>
<div class="t" style="left:226.70px;top:333.15px;font-size:14px;line-height:17px;color:#262733;letter-spacing:-1.117px;">DEL</div>
<div class="t" style="left:349.00px;top:333.15px;font-size:14px;line-height:17px;color:#262733;letter-spacing:-0.326px;">Delivery Fee</div>
<div class="t" style="left:532.00px;top:333.15px;font-size:14px;line-height:17px;color:#262733;letter-spacing:-0.074px;">INT</div>
<div class="t" style="left:625.75px;top:333.15px;font-size:14px;line-height:17px;color:#262733;letter-spacing:-1.625px;">SER</div>
<div class="t" style="left:762.75px;top:333.15px;font-size:14px;line-height:17px;color:#262733;letter-spacing:-0.186px;">550.00</div>
<div class="t" style="left:813.25px;top:333.15px;font-size:14px;line-height:17px;color:#262733;letter-spacing:-0.561px;">ea</div>
<div class="t" style="left:907.00px;top:333.15px;font-size:14px;line-height:17px;color:#262733;letter-spacing:-0.220px;">VAT</div>
<div class="t" style="left:1051.50px;top:333.15px;font-size:14px;line-height:17px;color:#262733;letter-spacing:-0.168px;">15.00</div>
<div class="t" style="left:1094.50px;top:333.15px;font-size:14px;line-height:17px;color:#262733;">A</div>
<div class="t" style="left:226.70px;top:359.40px;font-size:14px;line-height:17px;color:#262733;letter-spacing:-1.167px;">DEA</div>
<div class="t" style="left:349.00px;top:359.40px;font-size:14px;line-height:17px;color:#262733;letter-spacing:-0.393px;">Dealer Service Fee</div>
<div class="t" style="left:532.00px;top:359.40px;font-size:14px;line-height:17px;color:#262733;letter-spacing:-1.165px;">EXT</div>
<div class="t" style="left:625.75px;top:359.40px;font-size:14px;line-height:17px;color:#262733;letter-spacing:-1.625px;">SER</div>
<div class="t" style="left:762.75px;top:359.40px;font-size:14px;line-height:17px;color:#262733;letter-spacing:-0.186px;">350.00</div>
<div class="t" style="left:813.25px;top:359.40px;font-size:14px;line-height:17px;color:#262733;letter-spacing:-0.561px;">ea</div>
<div class="t" style="left:907.00px;top:359.40px;font-size:14px;line-height:17px;color:#262733;letter-spacing:-0.220px;">VAT</div>
<div class="t" style="left:1051.50px;top:359.40px;font-size:14px;line-height:17px;color:#262733;letter-spacing:-0.168px;">15.00</div>
<div class="t" style="left:1094.50px;top:359.40px;font-size:14px;line-height:17px;color:#262733;">A</div>
<div class="t" style="left:226.70px;top:385.65px;font-size:14px;line-height:17px;color:#262733;letter-spacing:-1.275px;">SET</div>
<div class="t" style="left:349.00px;top:385.65px;font-size:14px;line-height:17px;color:#262733;letter-spacing:-0.208px;">Settlements</div>
<div class="t" style="left:532.00px;top:385.65px;font-size:14px;line-height:17px;color:#262733;letter-spacing:-0.074px;">INT</div>
<div class="t" style="left:625.75px;top:385.65px;font-size:14px;line-height:17px;color:#262733;letter-spacing:-1.625px;">SER</div>
<div class="t" style="left:762.75px;top:385.65px;font-size:14px;line-height:17px;color:#262733;letter-spacing:-0.186px;">500.00</div>
<div class="t" style="left:813.25px;top:385.65px;font-size:14px;line-height:17px;color:#262733;letter-spacing:-0.561px;">ea</div>
<div class="t" style="left:907.00px;top:385.65px;font-size:14px;line-height:17px;color:#262733;letter-spacing:-0.220px;">VAT</div>
<div class="t" style="left:1051.50px;top:385.65px;font-size:14px;line-height:17px;color:#262733;letter-spacing:-0.168px;">15.00</div>
<div class="t" style="left:1094.50px;top:385.65px;font-size:14px;line-height:17px;color:#262733;">A</div>
<div class="t" style="left:226.70px;top:411.90px;font-size:14px;line-height:17px;color:#262733;letter-spacing:-0.785px;">INSP</div>
<div class="t" style="left:349.00px;top:411.90px;font-size:14px;line-height:17px;color:#262733;letter-spacing:-0.083px;">Inspection</div>
<div class="t" style="left:532.00px;top:411.90px;font-size:14px;line-height:17px;color:#262733;letter-spacing:-0.074px;">INT</div>
<div class="t" style="left:625.75px;top:411.90px;font-size:14px;line-height:17px;color:#262733;letter-spacing:-1.625px;">SER</div>
<div class="t" style="left:762.75px;top:411.90px;font-size:14px;line-height:17px;color:#262733;letter-spacing:-0.186px;">650.00</div>
<div class="t" style="left:813.25px;top:411.90px;font-size:14px;line-height:17px;color:#262733;letter-spacing:-0.561px;">ea</div>
<div class="t" style="left:907.00px;top:411.90px;font-size:14px;line-height:17px;color:#262733;letter-spacing:-0.220px;">VAT</div>
<div class="t" style="left:1051.50px;top:411.90px;font-size:14px;line-height:17px;color:#262733;letter-spacing:-0.168px;">15.00</div>
<div class="t" style="left:1094.50px;top:411.90px;font-size:14px;line-height:17px;color:#262733;">A</div>
<div class="t" style="left:226.70px;top:438.15px;font-size:14px;line-height:17px;color:#262733;letter-spacing:-0.825px;">TOLL</div>
<div class="t" style="left:349.00px;top:438.15px;font-size:14px;line-height:17px;color:#262733;letter-spacing:-0.162px;">Toll Fee</div>
<div class="t" style="left:532.00px;top:438.15px;font-size:14px;line-height:17px;color:#262733;letter-spacing:-1.165px;">EXT</div>
<div class="t" style="left:625.75px;top:438.15px;font-size:14px;line-height:17px;color:#262733;letter-spacing:-1.625px;">SER</div>
<div class="t" style="left:762.75px;top:438.15px;font-size:14px;line-height:17px;color:#262733;letter-spacing:-0.186px;">250.00</div>
<div class="t" style="left:813.25px;top:438.15px;font-size:14px;line-height:17px;color:#262733;letter-spacing:-0.561px;">ea</div>
<div class="t" style="left:907.00px;top:438.15px;font-size:14px;line-height:17px;color:#262733;letter-spacing:-0.220px;">VAT</div>
<div class="t" style="left:1059.01px;top:438.15px;font-size:14px;line-height:17px;color:#262733;letter-spacing:-0.140px;">0.00</div>
<div class="t" style="left:1094.50px;top:438.15px;font-size:14px;line-height:17px;color:#262733;">A</div>
<div class="t" style="left:226.70px;top:464.40px;font-size:14px;line-height:17px;color:#262733;letter-spacing:-1.386px;">MYS</div>
<div class="t" style="left:349.00px;top:464.40px;font-size:14px;line-height:17px;color:#262733;letter-spacing:-0.193px;">Meter Yield Short Fall</div>
<div class="t" style="left:532.00px;top:464.40px;font-size:14px;line-height:17px;color:#262733;letter-spacing:-0.074px;">INT</div>
<div class="t" style="left:625.75px;top:464.40px;font-size:14px;line-height:17px;color:#262733;letter-spacing:-1.625px;">SER</div>
<div class="t" style="left:762.75px;top:464.40px;font-size:14px;line-height:17px;color:#262733;letter-spacing:-0.186px;">500.00</div>
<div class="t" style="left:813.25px;top:464.40px;font-size:14px;line-height:17px;color:#262733;letter-spacing:-0.561px;">ea</div>
<div class="t" style="left:907.00px;top:464.40px;font-size:14px;line-height:17px;color:#262733;letter-spacing:-0.220px;">VAT</div>
<div class="t" style="left:1051.50px;top:464.40px;font-size:14px;line-height:17px;color:#262733;letter-spacing:-0.168px;">15.00</div>
<div class="t" style="left:1094.50px;top:464.40px;font-size:14px;line-height:17px;color:#262733;">A</div>
<div class="t" style="left:226.70px;top:490.65px;font-size:14px;line-height:17px;color:#262733;letter-spacing:-1.291px;">CLA</div>
<div class="t" style="left:349.00px;top:490.65px;font-size:14px;line-height:17px;color:#262733;letter-spacing:-0.449px;">Cleaning Fee</div>
<div class="t" style="left:532.00px;top:490.65px;font-size:14px;line-height:17px;color:#262733;letter-spacing:-0.074px;">INT</div>
<div class="t" style="left:625.75px;top:490.65px;font-size:14px;line-height:17px;color:#262733;letter-spacing:-1.625px;">SER</div>
<div class="t" style="left:762.75px;top:490.65px;font-size:14px;line-height:17px;color:#262733;letter-spacing:-0.186px;">500.00</div>
<div class="t" style="left:813.25px;top:490.65px;font-size:14px;line-height:17px;color:#262733;letter-spacing:-0.561px;">ea</div>
<div class="t" style="left:907.00px;top:490.65px;font-size:14px;line-height:17px;color:#262733;letter-spacing:-0.220px;">VAT</div>
<div class="t" style="left:1051.50px;top:490.65px;font-size:14px;line-height:17px;color:#262733;letter-spacing:-0.168px;">15.00</div>
<div class="t" style="left:1094.50px;top:490.65px;font-size:14px;line-height:17px;color:#262733;">A</div>
<div class="t" style="left:226.70px;top:516.90px;font-size:14px;line-height:17px;color:#262733;letter-spacing:-1.364px;">DES</div>
<div class="t" style="left:349.00px;top:516.90px;font-size:14px;line-height:17px;color:#262733;letter-spacing:-0.192px;">Design consultation</div>
<div class="t" style="left:532.00px;top:516.90px;font-size:14px;line-height:17px;color:#262733;letter-spacing:-0.074px;">INT</div>
<div class="t" style="left:625.75px;top:516.90px;font-size:14px;line-height:17px;color:#262733;letter-spacing:-1.625px;">SER</div>
<div class="t" style="left:762.75px;top:516.90px;font-size:14px;line-height:17px;color:#262733;letter-spacing:-0.186px;">750.00</div>
<div class="t" style="left:813.25px;top:516.90px;font-size:14px;line-height:17px;color:#262733;letter-spacing:-0.561px;">ea</div>
<div class="t" style="left:907.00px;top:516.90px;font-size:14px;line-height:17px;color:#262733;letter-spacing:-0.220px;">VAT</div>
<div class="t" style="left:1051.50px;top:516.90px;font-size:14px;line-height:17px;color:#262733;letter-spacing:-0.168px;">15.00</div>
<div class="t" style="left:1094.50px;top:516.90px;font-size:14px;line-height:17px;color:#262733;">A</div>
<div class="t" style="left:226.70px;top:543.15px;font-size:14px;line-height:17px;color:#262733;letter-spacing:-0.698px;">PRI</div>
<div class="t" style="left:349.00px;top:543.15px;font-size:14px;line-height:17px;color:#262733;letter-spacing:-0.138px;">Printing</div>
<div class="t" style="left:532.00px;top:543.15px;font-size:14px;line-height:17px;color:#262733;letter-spacing:-0.074px;">INT</div>
<div class="t" style="left:625.75px;top:543.15px;font-size:14px;line-height:17px;color:#262733;letter-spacing:-1.625px;">SER</div>
<div class="t" style="left:762.75px;top:543.15px;font-size:14px;line-height:17px;color:#262733;letter-spacing:-0.186px;">350.00</div>
<div class="t" style="left:813.25px;top:543.15px;font-size:14px;line-height:17px;color:#262733;letter-spacing:-0.561px;">ea</div>
<div class="t" style="left:907.00px;top:543.15px;font-size:14px;line-height:17px;color:#262733;letter-spacing:-0.220px;">VAT</div>
<div class="t" style="left:1051.50px;top:543.15px;font-size:14px;line-height:17px;color:#262733;letter-spacing:-0.168px;">15.00</div>
<div class="t" style="left:1094.50px;top:543.15px;font-size:14px;line-height:17px;color:#262733;">A</div>
<div class="t" style="left:226.70px;top:569.40px;font-size:14px;line-height:17px;color:#262733;letter-spacing:-1.087px;">TEST</div>
<div class="t" style="left:349.00px;top:569.40px;font-size:14px;line-height:17px;color:#262733;letter-spacing:-0.212px;">Test Service</div>
<div class="t" style="left:532.00px;top:569.40px;font-size:14px;line-height:17px;color:#262733;letter-spacing:-0.074px;">INT</div>
<div class="t" style="left:625.75px;top:569.40px;font-size:14px;line-height:17px;color:#262733;letter-spacing:-1.625px;">SER</div>
<div class="t" style="left:762.75px;top:569.40px;font-size:14px;line-height:17px;color:#262733;letter-spacing:-0.186px;">550.00</div>
<div class="t" style="left:813.25px;top:569.40px;font-size:14px;line-height:17px;color:#262733;letter-spacing:-0.561px;">ea</div>
<div class="t" style="left:907.00px;top:569.40px;font-size:14px;line-height:17px;color:#262733;letter-spacing:-0.220px;">VAT</div>
<div class="t" style="left:1051.50px;top:569.40px;font-size:14px;line-height:17px;color:#262733;letter-spacing:-0.168px;">15.00</div>
<div class="t" style="left:1094.50px;top:569.40px;font-size:14px;line-height:17px;color:#262733;">A</div>
<div class="t" style="left:226.70px;top:595.65px;font-size:14px;line-height:17px;color:#262733;letter-spacing:-0.475px;">INST</div>
<div class="t" style="left:349.00px;top:595.65px;font-size:14px;line-height:17px;color:#262733;letter-spacing:-0.117px;">Installation Fee</div>
<div class="t" style="left:532.00px;top:595.65px;font-size:14px;line-height:17px;color:#262733;letter-spacing:-0.074px;">INT</div>
<div class="t" style="left:625.75px;top:595.65px;font-size:14px;line-height:17px;color:#262733;letter-spacing:-1.625px;">SER</div>
<div class="t" style="left:751.07px;top:595.65px;font-size:14px;line-height:17px;color:#262733;letter-spacing:-0.140px;">1,200.00</div>
<div class="t" style="left:813.25px;top:595.65px;font-size:14px;line-height:17px;color:#262733;letter-spacing:-0.561px;">ea</div>
<div class="t" style="left:907.00px;top:595.65px;font-size:14px;line-height:17px;color:#262733;letter-spacing:-0.220px;">VAT</div>
<div class="t" style="left:1051.50px;top:595.65px;font-size:14px;line-height:17px;color:#262733;letter-spacing:-0.168px;">15.00</div>
<div class="t" style="left:1094.50px;top:595.65px;font-size:14px;line-height:17px;color:#262733;">A</div>
<div class="t" style="left:226.70px;top:621.90px;font-size:14px;line-height:17px;color:#262733;letter-spacing:-1.203px;">CALL</div>
<div class="t" style="left:349.00px;top:621.90px;font-size:14px;line-height:17px;color:#262733;letter-spacing:-0.381px;">Call Out Fee</div>
<div class="t" style="left:532.00px;top:621.90px;font-size:14px;line-height:17px;color:#262733;letter-spacing:-0.074px;">INT</div>
<div class="t" style="left:625.75px;top:621.90px;font-size:14px;line-height:17px;color:#262733;letter-spacing:-1.625px;">SER</div>
<div class="t" style="left:762.75px;top:621.90px;font-size:14px;line-height:17px;color:#262733;letter-spacing:-0.186px;">450.00</div>
<div class="t" style="left:813.25px;top:621.90px;font-size:14px;line-height:17px;color:#262733;letter-spacing:-0.561px;">ea</div>
<div class="t" style="left:907.00px;top:621.90px;font-size:14px;line-height:17px;color:#262733;letter-spacing:-0.220px;">VAT</div>
<div class="t" style="left:1051.50px;top:621.90px;font-size:14px;line-height:17px;color:#262733;letter-spacing:-0.168px;">15.00</div>
<div class="t" style="left:1094.50px;top:621.90px;font-size:14px;line-height:17px;color:#262733;">A</div>
<svg class="abs" style="left:210.00px;top:625.20px" width="5.6" height="10" viewBox="0 0 5.6 10"><path d="M0 0L5.600 5L0 10Z" fill="#1e1f28"/></svg>
<svg class="abs" style="left:199.80px;top:616.80px" width="22.7" height="26.5" viewBox="0 0 22.7 26.5"><rect x="1.500" y="1.500" width="19.700" height="23.500" fill="none" stroke="#4268d6" stroke-width="3"/></svg>
<svg class="abs" style="left:18.200px;top:281px" width="179.300" height="92.600"><rect x="1.750" y="1.750" width="175.800" height="89.100" fill="none" stroke="#4268d6" stroke-width="3.500"/></svg>
<svg class="abs" style="left:0;top:0" width="1306" height="920" viewBox="0 0 1306 920"><line x1="318.80" y1="20.90" x2="461.00" y2="17.58" stroke="#4169e1" stroke-width="4.00"/><polygon points="477.20,17.20 460.17,24.50 459.84,10.70" fill="#4169e1"/><line x1="384.00" y1="166.60" x2="426.07" y2="103.04" stroke="#4169e1" stroke-width="4.00"/><polygon points="434.90,89.70 430.94,107.46 420.10,100.29" fill="#4169e1"/><line x1="634.10" y1="200.00" x2="578.63" y2="140.24" stroke="#4169e1" stroke-width="4.10"/><polygon points="565.50,126.10 584.66,136.01 573.96,145.94" fill="#4169e1"/><line x1="334.00" y1="742.10" x2="226.70" y2="659.00" stroke="#4169e1" stroke-width="4.10"/><polygon points="211.60,647.30 232.24,653.48 222.75,665.73" fill="#4169e1"/><line x1="168.20" y1="157.00" x2="135.28" y2="259.42" stroke="#4169e1" stroke-width="4.10"/><polygon points="129.40,277.70 128.16,256.08 143.01,260.86" fill="#4169e1"/><circle cx="318.80" cy="20.90" r="14.25" fill="#4169e1"/><text transform="translate(318.40,27.00) scale(.86,1)" x="0" y="0" font-family="DejaVu Sans, sans-serif" font-size="16.400" fill="#0b0c4a" text-anchor="middle">1</text><circle cx="384.00" cy="166.60" r="14.80" fill="#4169e1"/><text x="383.40" y="172.60" font-family="Liberation Sans, sans-serif" font-size="16.7" fill="#0b0c4a" text-anchor="middle">2</text><circle cx="634.10" cy="200.00" r="16.00" fill="#4169e1"/><text x="633.50" y="206.00" font-family="Liberation Sans, sans-serif" font-size="16.7" fill="#0b0c4a" text-anchor="middle">3</text><circle cx="334.00" cy="742.10" r="16.00" fill="#4169e1"/><text x="333.40" y="748.10" font-family="Liberation Sans, sans-serif" font-size="16.7" fill="#0b0c4a" text-anchor="middle">4</text><circle cx="168.20" cy="157.00" r="16.00" fill="#4169e1"/><text x="167.60" y="163.00" font-family="Liberation Sans, sans-serif" font-size="16.7" fill="#0b0c4a" text-anchor="middle">5</text></svg>
<div class="abs" style="left:0;top:0;width:1306px;height:920px;border:2px solid #000;border-bottom-width:2px;pointer-events:none"></div>
</body></html>
